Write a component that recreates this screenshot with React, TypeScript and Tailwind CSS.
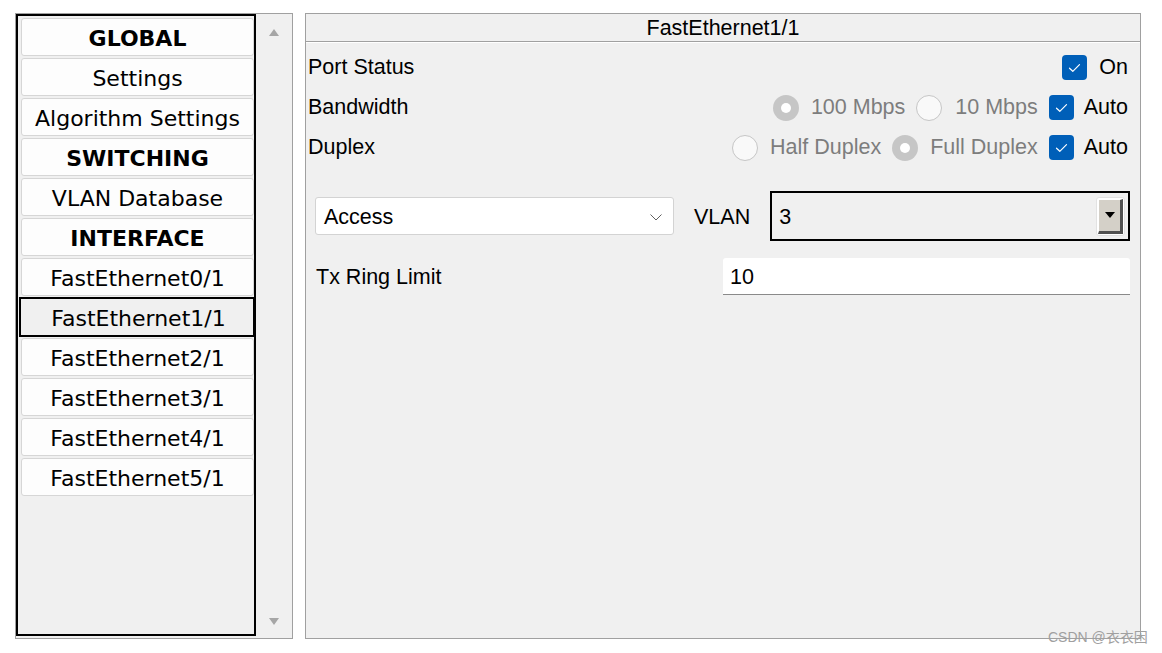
import React from 'react';

// ==========================================
// SWITCH CONFIG – INTERFACE PAGE
// ==========================================

const LEFT_FONT = { fontFamily: '"DejaVu Sans", Verdana, sans-serif' };

type NavItem = { label: string; header?: boolean; selected?: boolean };

const NAV: NavItem[] = [
  { label: 'GLOBAL', header: true },
  { label: 'Settings' },
  { label: 'Algorithm Settings' },
  { label: 'SWITCHING', header: true },
  { label: 'VLAN Database' },
  { label: 'INTERFACE', header: true },
  { label: 'FastEthernet0/1' },
  { label: 'FastEthernet1/1', selected: true },
  { label: 'FastEthernet2/1' },
  { label: 'FastEthernet3/1' },
  { label: 'FastEthernet4/1' },
  { label: 'FastEthernet5/1' },
];

function Checkbox() {
  return (
    <div className="w-[25px] h-[25px] rounded-[4px] bg-[#005fb8] flex items-center justify-center">
      <svg width="13" height="10" viewBox="0 0 13 10" fill="none">
        <path d="M1.5 5.2 L4.8 8.3 L11.5 1.6" stroke="white" strokeWidth="1.2" strokeLinecap="round" strokeLinejoin="round" />
      </svg>
    </div>
  );
}

function Radio({ checked }: { checked?: boolean }) {
  return checked ? (
    <div className="w-[26px] h-[26px] rounded-full bg-[#c6c6c6] flex items-center justify-center">
      <div className="w-[10px] h-[10px] rounded-full bg-white" />
    </div>
  ) : (
    <div className="w-[26px] h-[26px] rounded-full bg-[#f9f9f9] border border-[#c6c6c6]" />
  );
}

function ScrollArrow({ down }: { down?: boolean }) {
  return (
    <svg width="10" height="7" viewBox="0 0 10 7">
      {down ? <path d="M0 0 H10 L5 7 Z" fill="#a6a6a6" /> : <path d="M0 7 H10 L5 0 Z" fill="#a6a6a6" />}
    </svg>
  );
}

export default function App() {
  return (
    <div
      className="relative w-[1162px] h-[653px] bg-white flex items-start gap-[12px] pt-[13px] pl-[15px] text-black"
      style={{ fontFamily: '"Liberation Sans", Arial, sans-serif' }}
    >
      {/* Left: navigation list */}
      <div className="w-[278px] h-[626px] border border-[#a0a0a0] bg-[#f0f0f0] flex">
        <div className="w-[240px] h-[622px] border-2 border-black pt-[2px] flex flex-col" style={LEFT_FONT}>
          {NAV.map((item) =>
            item.selected ? (
              <div
                key={item.label}
                className="ml-[1px] w-[236px] h-[40px] mt-[-1px] mb-[1px] border-2 border-black bg-[#f0f0f0] flex items-center justify-center text-[22px] pl-[3px] pt-[3px]"
              >
                {item.label}
              </div>
            ) : (
              <div
                key={item.label}
                className={`ml-[3px] w-[233px] h-[38px] mb-[2px] rounded-[3px] border border-[#d6d6d6] bg-[#fdfdfd] flex items-center justify-center text-[22px] pt-[2px] ${
                  item.header ? 'font-bold' : ''
                }`}
              >
                {item.label}
              </div>
            )
          )}
        </div>
        <div className="flex-1 flex flex-col items-center justify-between pt-[15px] pb-[13px]">
          <ScrollArrow />
          <ScrollArrow down />
        </div>
      </div>

      {/* Right: interface settings */}
      <div className="w-[836px] h-[626px] border border-[#a0a0a0] bg-[#f0f0f0] flex flex-col text-[21.5px]">
        <div className="h-[28px] flex items-center justify-center border-b border-[#a0a0a0] pt-[1px]">
          FastEthernet1/1
        </div>
        <div className="h-px bg-white" />

        <div className="mt-[4px] h-[40px] flex items-center justify-between pl-[2px] pr-[12px] pt-[1px]">
          <span>Port Status</span>
          <div className="flex items-center gap-[12px]">
            <Checkbox />
            <span>On</span>
          </div>
        </div>

        <div className="h-[40px] flex items-center justify-between pl-[2px] pr-[12px] pt-[1px]">
          <span>Bandwidth</span>
          <div className="flex items-center">
            <Radio checked />
            <span className="ml-[12px] text-[#7d7d7d]">100 Mbps</span>
            <span className="ml-[11px]"><Radio /></span>
            <span className="ml-[13px] text-[#7d7d7d]">10 Mbps</span>
            <span className="ml-[11px]"><Checkbox /></span>
            <span className="ml-[10px]">Auto</span>
          </div>
        </div>

        <div className="h-[40px] flex items-center justify-between pl-[2px] pr-[12px] pt-[1px]">
          <span>Duplex</span>
          <div className="flex items-center">
            <Radio />
            <span className="ml-[12px] text-[#7d7d7d]">Half Duplex</span>
            <span className="ml-[11px]"><Radio checked /></span>
            <span className="ml-[12px] text-[#7d7d7d]">Full Duplex</span>
            <span className="ml-[11px]"><Checkbox /></span>
            <span className="ml-[10px]">Auto</span>
          </div>
        </div>

        {/* Mode + VLAN */}
        <div className="mt-[24px] h-[50px] flex items-center pl-[9px] pr-[8px]">
          <div className="w-[359px] h-[38px] rounded-[3px] border border-[#d3d3d3] bg-white flex items-center justify-between pl-[8px] pr-[11px] pt-[2px]">
            <span>Access</span>
            <svg width="12" height="7" viewBox="0 0 12 7" fill="none">
              <path d="M0.5 0.5 L6 6 L11.5 0.5" stroke="#606060" strokeWidth="1" />
            </svg>
          </div>
          <span className="ml-[20px] pt-[2px]">VLAN</span>
          <div className="ml-[20px] w-[360px] h-[50px] border-2 border-black flex items-center justify-between pl-[7px] pr-[3px]">
            <span className="pt-[2px]">3</span>
            <div className="w-[29px] h-[39px] rounded-[3px] border border-[#e2e2e2] bg-white p-px">
              <div className="w-full h-full bg-[#d4d0c8] border-t border-l border-white border-r-[3px] border-b-[3px] border-r-[#505050] border-b-[#505050] flex items-center justify-center">
                <svg width="10" height="6" viewBox="0 0 10 6">
                  <path d="M0 0 H10 L5 6 Z" fill="black" />
                </svg>
              </div>
            </div>
          </div>
        </div>

        {/* Tx Ring Limit */}
        <div className="mt-[17px] h-[37px] flex items-center pl-[10px] pr-[9px]">
          <span className="w-[407px] pt-[2px]">Tx Ring Limit</span>
          <div className="w-[407px] h-[37px] bg-white rounded-t-[3px] border-b border-[#8a8a8a] flex items-center pl-[7px] pt-[2px]">
            10
          </div>
        </div>
      </div>

      {/* Watermark */}
      <div
        className="absolute left-[1048px] top-[627px] text-[14px] text-[#a0a0a0]"
        style={{ fontFamily: '"Liberation Sans", "Noto Sans CJK SC", sans-serif' }}
      >
        CSDN @衣衣困
      </div>
    </div>
  );
}
